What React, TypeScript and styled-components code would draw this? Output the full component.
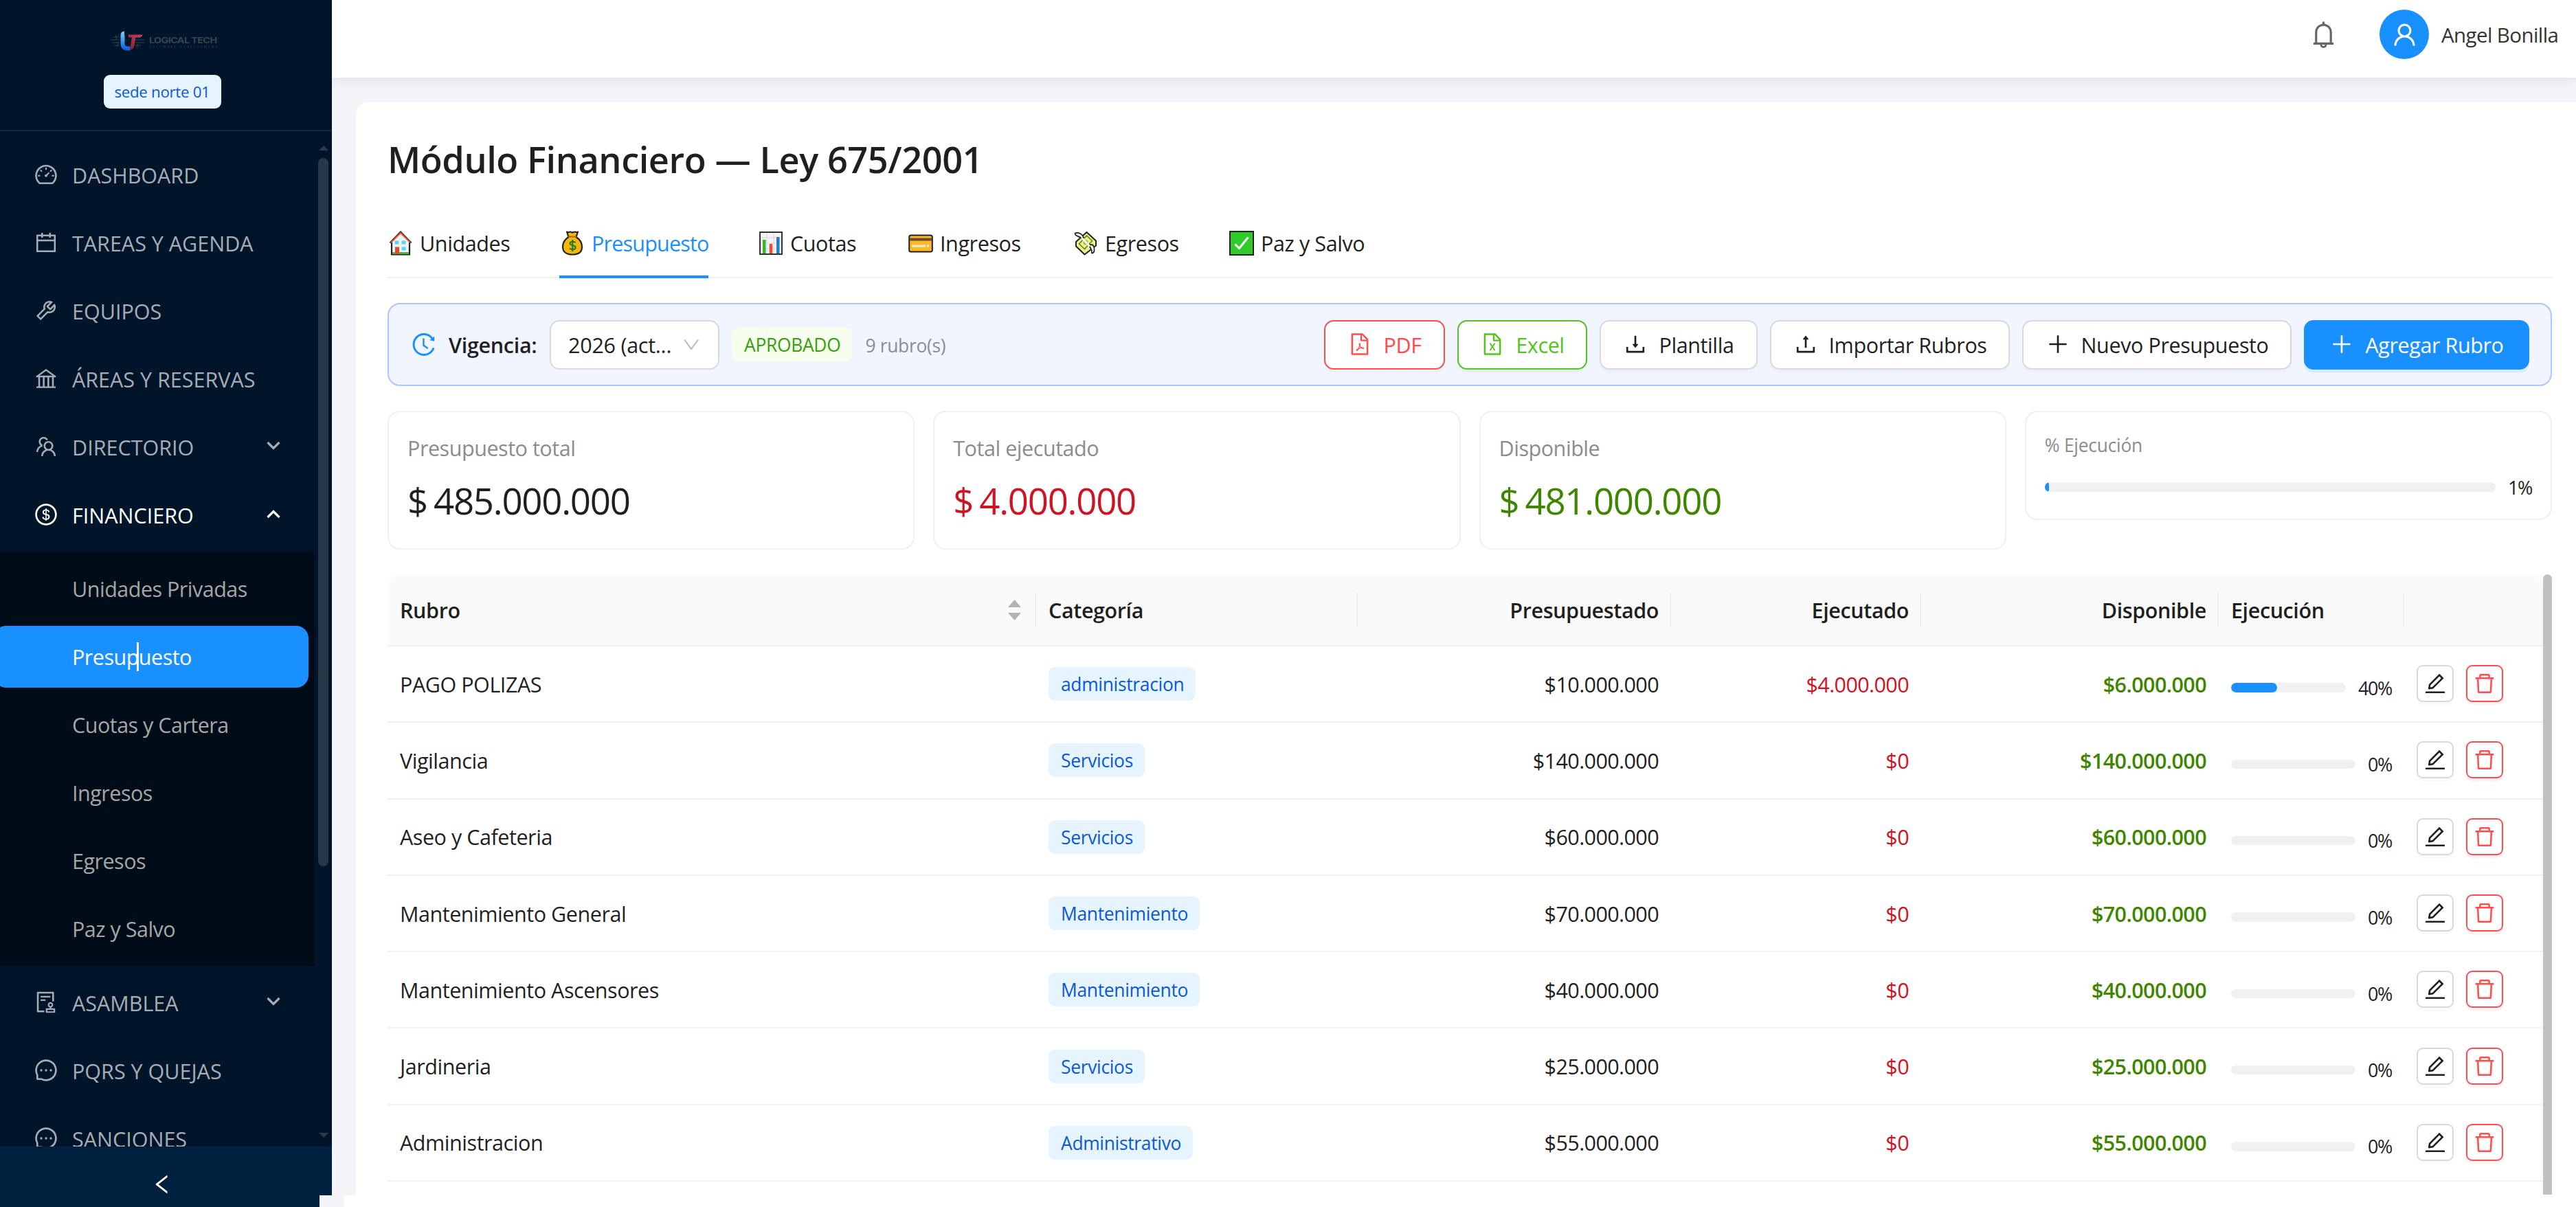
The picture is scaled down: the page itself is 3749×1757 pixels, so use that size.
import type { ReactNode } from "react";
import styled, { createGlobalStyle } from "styled-components";
import {
  AiOutlineAudit,
  AiOutlineBank,
  AiOutlineBell,
  AiOutlineCalendar,
  AiOutlineDashboard,
  AiOutlineDelete,
  AiOutlineDollarCircle,
  AiOutlineDownload,
  AiOutlineDown,
  AiOutlineEdit,
  AiOutlineFileExcel,
  AiOutlineFilePdf,
  AiOutlineHistory,
  AiOutlineLeft,
  AiOutlineMessage,
  AiOutlinePlus,
  AiOutlineTeam,
  AiOutlineTool,
  AiOutlineUpload,
  AiOutlineUser,
} from "react-icons/ai";

interface MenuEntry {
  label: string;
  icon: ReactNode;
  arrow?: "up" | "down";
  active?: boolean;
}

interface Rubro {
  name: string;
  category: string;
  budget: string;
  executed: string;
  available: string;
  percent: number;
}

const topMenu: MenuEntry[] = [
  { label: "DASHBOARD", icon: <AiOutlineDashboard /> },
  { label: "TAREAS Y AGENDA", icon: <AiOutlineCalendar /> },
  { label: "EQUIPOS", icon: <AiOutlineTool /> },
  { label: "ÁREAS Y RESERVAS", icon: <AiOutlineBank /> },
  { label: "DIRECTORIO", icon: <AiOutlineTeam />, arrow: "down" },
  {
    label: "FINANCIERO",
    icon: <AiOutlineDollarCircle />,
    arrow: "up",
    active: true,
  },
];

const financeMenu = [
  "Unidades Privadas",
  "Presupuesto",
  "Cuotas y Cartera",
  "Ingresos",
  "Egresos",
  "Paz y Salvo",
];

const bottomMenu: MenuEntry[] = [
  { label: "ASAMBLEA", icon: <AiOutlineAudit />, arrow: "down" },
  { label: "PQRS Y QUEJAS", icon: <AiOutlineMessage /> },
  { label: "SANCIONES", icon: <AiOutlineMessage /> },
];

const rubros: Rubro[] = [
  {
    name: "PAGO POLIZAS",
    category: "administracion",
    budget: "$10.000.000",
    executed: "$4.000.000",
    available: "$6.000.000",
    percent: 40,
  },
  {
    name: "Vigilancia",
    category: "Servicios",
    budget: "$140.000.000",
    executed: "$0",
    available: "$140.000.000",
    percent: 0,
  },
  {
    name: "Aseo y Cafeteria",
    category: "Servicios",
    budget: "$60.000.000",
    executed: "$0",
    available: "$60.000.000",
    percent: 0,
  },
  {
    name: "Mantenimiento General",
    category: "Mantenimiento",
    budget: "$70.000.000",
    executed: "$0",
    available: "$70.000.000",
    percent: 0,
  },
  {
    name: "Mantenimiento Ascensores",
    category: "Mantenimiento",
    budget: "$40.000.000",
    executed: "$0",
    available: "$40.000.000",
    percent: 0,
  },
  {
    name: "Jardineria",
    category: "Servicios",
    budget: "$25.000.000",
    executed: "$0",
    available: "$25.000.000",
    percent: 0,
  },
  {
    name: "Administracion",
    category: "Administrativo",
    budget: "$55.000.000",
    executed: "$0",
    available: "$55.000.000",
    percent: 0,
  },
];

const HouseIcon = () => (
  <svg viewBox="0 0 36 36">
    <path
      d="M2.500 17.500 18 1.500l15.500 16M5 16v18.500h26V16"
      fill="#f2f2f2"
      stroke="#222"
      strokeWidth="2.200"
    />
    <path d="M4 17 18 3l14 14" fill="none" stroke="#e5533d" strokeWidth="2" />
    <rect x="6" y="31" width="24" height="3" fill="#4bb543" />
    <rect x="10" y="23.500" width="6" height="10" fill="#e8452c" />
    <path
      d="M9.500 14.500h6v5h-6zM19.500 14.500h6v5h-6zM19.500 23.500h6v5h-6z"
      fill="#4fd8f7"
    />
  </svg>
);

const MoneyBagIcon = () => (
  <svg viewBox="0 0 36 36">
    <path
      d="M10 1.500c2 1.300 3.600 0 5 0s2 1 3 1 2-1 3.500-1 3 1.300 4.500 0l-2.500 7.500c5.500 3.500 8.500 8.500 8.500 14.500 0 7-5 11-14 11s-14-4-14-11c0-6 3-11 8.500-14.500z"
      fill="#f8b60c"
      stroke="#222"
      strokeWidth="2.200"
      strokeLinejoin="round"
    />
    <path d="M12 8.500h12" stroke="#a86400" strokeWidth="2" />
    <path
      d="M22.500 17.200c-1-1.500-8-2.500-8 1.300 0 3.500 8.200 2 8.200 5.700 0 3.600-7.400 3.300-8.700 1M18.300 13v17"
      fill="none"
      stroke="#1d7a22"
      strokeWidth="2"
    />
  </svg>
);

const ChartIcon = () => (
  <svg viewBox="0 0 36 36">
    <rect
      x="2"
      y="2"
      width="32"
      height="32"
      fill="#f4f4f4"
      stroke="#333"
      strokeWidth="2"
    />
    <path
      d="M3 10h30M3 18h30M3 26h30M12 3v30M22 3v30"
      stroke="#d8d8d8"
      strokeWidth="1"
    />
    <rect x="6" y="13" width="4.500" height="20" fill="#36b82c" />
    <rect x="15.700" y="19" width="4.500" height="14" fill="#ee4b3a" />
    <rect x="26" y="9" width="4.500" height="24" fill="#1d7fd8" />
  </svg>
);

const CardIcon = () => (
  <svg viewBox="0 0 36 36">
    <rect
      x="1.200"
      y="6.500"
      width="33.600"
      height="24"
      rx="2.500"
      fill="#fdb72b"
      stroke="#222"
      strokeWidth="2"
    />
    <rect x="2.200" y="10.500" width="31.600" height="4" fill="#6b4a2e" />
    <rect x="5" y="20.500" width="20" height="3" fill="#fff3c9" />
    <circle cx="28.500" cy="22" r="1.800" fill="#fff3c9" />
  </svg>
);

const FlyingMoneyIcon = () => (
  <svg viewBox="0 0 36 36">
    <path
      d="M19.500 2 33 14.500v7L16.500 34.500 4 22.500V16z"
      fill="#eaf583"
      stroke="#222"
      strokeWidth="2"
      strokeLinejoin="round"
    />
    <path
      d="m19.500 7 8 7.500-11 12-8-7.500z"
      fill="none"
      stroke="#6f7a35"
      strokeWidth="1.600"
    />
    <circle cx="18" cy="16.800" r="3.600" fill="#a7b25a" />
    <path
      d="M12.500 11.500C8 6 3 9.500 2.500 3.500c5-1.500 10 .5 12.500 6zM22.500 20c1.500 5 5.500 6 4.500 12.500 4 0 5-7 1.500-12z"
      fill="#fff"
      stroke="#222"
      strokeWidth="1.800"
      strokeLinejoin="round"
    />
    <path d="m12 10 12 12.500" stroke="#fff" strokeWidth="2.600" />
  </svg>
);

const CheckIcon = () => (
  <svg viewBox="0 0 36 36">
    <rect
      x="1"
      y="1"
      width="34"
      height="34"
      fill="#2fcb28"
      stroke="#222"
      strokeWidth="2"
    />
    <path
      d="m8.500 19.500 6 6L27.500 9.500"
      fill="none"
      stroke="#fff"
      strokeWidth="3"
    />
  </svg>
);

const tabs = [
  { label: "Unidades", icon: <HouseIcon />, width: 178 },
  { label: "Presupuesto", icon: <MoneyBagIcon />, width: 217, active: true },
  { label: "Cuotas", icon: <ChartIcon />, width: 146 },
  { label: "Ingresos", icon: <CardIcon />, width: 168 },
  { label: "Egresos", icon: <FlyingMoneyIcon />, width: 155 },
  { label: "Paz y Salvo", icon: <CheckIcon />, width: 205 },
];

const stats = [
  { label: "Presupuesto total", value: "485.000.000", color: "#1f1f1f" },
  { label: "Total ejecutado", value: "4.000.000", color: "#cf1322" },
  { label: "Disponible", value: "481.000.000", color: "#3f8600" },
];

const BrandLogo = () => (
  <Logo viewBox="0 0 159 28">
    <defs>
      <linearGradient id="brandBlue" x1="0" y1="0" x2="0" y2="1">
        <stop offset="0" stopColor="#6cc4f5" />
        <stop offset="1" stopColor="#1565d8" />
      </linearGradient>
      <linearGradient id="brandRed" x1="1" y1="0" x2="0" y2="1">
        <stop offset="0" stopColor="#cf3f5c" />
        <stop offset="1" stopColor="#7d1f36" />
      </linearGradient>
    </defs>
    <g stroke="#35414f" strokeWidth="1" fill="none">
      <path d="M4 12h13M8 8h9M6 16h11M9 20h8M12 5v6M14 15v7" />
      <path d="M40 12h13M39 16h14M40 8h8M39 20h9M45 5v5M43 18v6" />
    </g>
    {/* interlocked mark: the blue hook passes under the red hammer */}
    <path
      d="M24 2.500c-1.800 0-2.500 1-2.500 3V17c0 5.500 3 7.500 7.500 7.500h3.500"
      fill="none"
      stroke="url(#brandBlue)"
      strokeWidth="6"
    />
    <path
      d="M29 4.500h21.500c-.5 2.500-2.500 4-5.500 4h-4.500L38 22c-.5 2.700-2.500 4-6 4l3-17.500h-4.500z"
      fill="url(#brandRed)"
    />
    <g fontFamily="Inter, sans-serif" fill="#3b434e">
      <text
        x="60"
        y="17"
        fontSize="11.500"
        fontWeight="700"
        textLength="98.500"
        lengthAdjust="spacingAndGlyphs"
      >
        LOGICAL TECH
      </text>
      <text x="60" y="23.500" fontSize="4.200" textLength="98.500">
        SOFTWARE DEVELOPMENT
      </text>
    </g>
  </Logo>
);

const Arrow = ({ up }: { up?: boolean }) => (
  <ArrowSvg viewBox="0 0 20 14">
    <path d={up ? "M1.500 12 10 3.500l8.500 8.500" : "M1.500 2 10 10.500 18.500 2"} />
  </ArrowSvg>
);

const renderEntry = (entry: MenuEntry) => (
  <MenuItem key={entry.label} $active={entry.active}>
    {entry.icon}
    <span>{entry.label}</span>
    {entry.arrow && <Arrow up={entry.arrow === "up"} />}
  </MenuItem>
);

const Progress = ({ percent }: { percent: number }) => (
  <ProgressRow>
    <ProgressTrack>
      <ProgressFill style={{ width: `${percent}%` }} />
    </ProgressTrack>
    <span>{percent}%</span>
  </ProgressRow>
);

export default function App() {
  return (
    <>
      <GlobalStyle />
      <Layout>
        <Sider>
          <SiderHeader>
            <BrandLogo />
            <SiteTag>sede norte 01</SiteTag>
          </SiderHeader>
          <SiderBody>
            <Menu>
              {topMenu.map(renderEntry)}
              <SubMenu>
                {financeMenu.map((label) => (
                  <SubMenuItem key={label} $selected={label === "Presupuesto"}>
                    {label}
                    {label === "Presupuesto" && <TextCursor />}
                  </SubMenuItem>
                ))}
              </SubMenu>
              {bottomMenu.map(renderEntry)}
            </Menu>
            <SiderScroll>
              <ScrollArrow viewBox="0 0 14 7">
                <path d="M0 7 7 0l7 7z" />
              </ScrollArrow>
              <SiderThumb />
              <ScrollArrow viewBox="0 0 14 7">
                <path d="M0 0l7 7 7-7z" />
              </ScrollArrow>
            </SiderScroll>
          </SiderBody>
          <Collapse>
            <AiOutlineLeft />
          </Collapse>
        </Sider>

        <Main>
          <Header>
            <AiOutlineBell />
            <Avatar>
              <AiOutlineUser />
            </Avatar>
            <UserName>Angel Bonilla</UserName>
          </Header>

          <Content>
            <Title>Módulo Financiero — Ley 675/2001</Title>
            <Tabs>
              {tabs.map((tab) => (
                <Tab key={tab.label} $active={tab.active} $width={tab.width}>
                  {tab.icon}
                  {tab.label}
                </Tab>
              ))}
            </Tabs>

            <Toolbar>
              <AiOutlineHistory />
              <PeriodLabel>Vigencia:</PeriodLabel>
              <Select>
                <span>2026 (act...</span>
                <AiOutlineDown />
              </Select>
              <StatusTag>APROBADO</StatusTag>
              <Count>9 rubro(s)</Count>
              <Actions>
                <Button $width={176} $color="#ff4d4f">
                  <AiOutlineFilePdf />
                  PDF
                </Button>
                <Button $width={189} $color="#52c41a">
                  <AiOutlineFileExcel />
                  Excel
                </Button>
                <Button $width={230}>
                  <AiOutlineDownload />
                  Plantilla
                </Button>
                <Button $width={349}>
                  <AiOutlineUpload />
                  Importar Rubros
                </Button>
                <Button $width={392}>
                  <AiOutlinePlus />
                  Nuevo Presupuesto
                </Button>
                <PrimaryButton $width={328}>
                  <AiOutlinePlus />
                  Agregar Rubro
                </PrimaryButton>
              </Actions>
            </Toolbar>

            <Stats>
              {stats.map((stat) => (
                <StatCard key={stat.label}>
                  <StatLabel>{stat.label}</StatLabel>
                  <StatValue $color={stat.color}>
                    <span>$</span>
                    {stat.value}
                  </StatValue>
                </StatCard>
              ))}
              <ExecutionCard>
                <ExecutionLabel>% Ejecución</ExecutionLabel>
                <Progress percent={1} />
              </ExecutionCard>
            </Stats>

            <TableArea>
              <Table>
                <HeadRow>
                  <HeadCell>
                    Rubro
                    <Sorter viewBox="0 0 19 30">
                      <path d="M0 11 9.500 0 19 11zM0 19l9.500 11L19 19z" />
                    </Sorter>
                  </HeadCell>
                  <HeadCell>Categoría</HeadCell>
                  <HeadCell $right>Presupuestado</HeadCell>
                  <HeadCell $right>Ejecutado</HeadCell>
                  <HeadCell $right>Disponible</HeadCell>
                  <HeadCell>Ejecución</HeadCell>
                  <HeadCell />
                </HeadRow>
                {rubros.map((rubro) => (
                  <Row key={rubro.name}>
                    <Cell>{rubro.name}</Cell>
                    <Cell>
                      <CategoryTag>{rubro.category}</CategoryTag>
                    </Cell>
                    <AmountCell>{rubro.budget}</AmountCell>
                    <AmountCell $color="#cf1322">{rubro.executed}</AmountCell>
                    <AmountCell $color="#3f8600" $strong>
                      {rubro.available}
                    </AmountCell>
                    <ProgressCell>
                      <Progress percent={rubro.percent} />
                    </ProgressCell>
                    <Cell>
                      <IconButton>
                        <AiOutlineEdit />
                      </IconButton>
                      <IconButton $danger>
                        <AiOutlineDelete />
                      </IconButton>
                    </Cell>
                  </Row>
                ))}
                <TableEdge />
              </Table>
              <TableThumb />
            </TableArea>
          </Content>
        </Main>
        <CornerStrip />
      </Layout>
    </>
  );
}

const GlobalStyle = createGlobalStyle`
  * {
    box-sizing: border-box;
  }
  body {
    margin: 0;
    overflow: hidden;
    font-family: "Open Sans", "Noto Sans", sans-serif;
    font-size: 30.5px;
    letter-spacing: -0.45px;
    color: #1f1f1f;
  }
  svg {
    flex-shrink: 0;
  }
`;

const Layout = styled.div`
  position: relative;
  display: flex;
  width: 100%;
  height: 1757px;
  overflow: hidden;
  background: #f3f5f9;
`;

const Sider = styled.aside`
  display: flex;
  flex-direction: column;
  flex-shrink: 0;
  width: 483px;
  background: #001529;
`;

const SiderHeader = styled.div`
  display: flex;
  flex-direction: column;
  align-items: center;
  flex-shrink: 0;
  height: 191px;
  padding: 46px 11px 0 0;
  border-bottom: 2px solid #122739;
`;

const Logo = styled.svg`
  width: 159px;
  height: 28px;
  overflow: visible;
`;

const SiteTag = styled.span`
  display: flex;
  align-items: center;
  justify-content: center;
  width: 171px;
  height: 49px;
  margin-top: 35px;
  border-radius: 9px;
  background: #e6f4ff;
  color: #0958d9;
  font-size: 22.3px;
  letter-spacing: -0.3px;
`;

const SiderBody = styled.div`
  display: flex;
  flex: 1;
  min-height: 0;
`;

const Menu = styled.nav`
  display: flex;
  flex-direction: column;
  gap: 9px;
  width: 458px;
  padding-top: 19px;
  overflow: hidden;
`;

const MenuItem = styled.div<{ $active?: boolean }>`
  display: flex;
  align-items: center;
  flex-shrink: 0;
  gap: 20px;
  height: 90px;
  padding: 0 50px 0 49px;
  color: ${({ $active }) => ($active ? "#ffffff" : "#a6adb4")};
  letter-spacing: 0;

  span {
    flex: 1;
  }

  > svg:first-child {
    width: 36px;
    height: 36px;
    margin-top: -2px;
  }
`;

const ArrowSvg = styled.svg`
  width: 20px;
  height: 14px;
  margin-top: -4px;
  fill: none;
  stroke: currentColor;
  stroke-width: 3.2;
`;

const SubMenu = styled.div`
  display: flex;
  flex-direction: column;
  flex-shrink: 0;
  gap: 9px;
  height: 603px;
  margin-top: -1px;
  padding: 9px 9px 9px 0;
  background: #000c17;
`;

const SubMenuItem = styled.div<{ $selected: boolean }>`
  position: relative;
  display: flex;
  align-items: center;
  height: 90px;
  margin-left: -9px;
  padding-left: 114px;
  border-radius: 18px;
  background: ${({ $selected }) => ($selected ? "#1890ff" : "transparent")};
  color: ${({ $selected }) => ($selected ? "#ffffff" : "#a6a6a6")};
  letter-spacing: -0.5px;
`;

const TextCursor = styled.span`
  position: absolute;
  top: 24px;
  left: 208px;
  width: 3px;
  height: 42px;
  background: #ffffff;
`;

const SiderScroll = styled.div`
  display: flex;
  flex-direction: column;
  align-items: center;
  width: 25px;
  padding: 21px 0 13px;
`;

const ScrollArrow = styled.svg`
  width: 14px;
  height: 7px;
  fill: #2b3c4c;
`;

const SiderThumb = styled.div`
  width: 15px;
  height: 1031px;
  margin: 11px 0 388px;
  border-radius: 8px;
  background: #263747;
`;

const Collapse = styled.div`
  display: flex;
  align-items: center;
  justify-content: center;
  flex-shrink: 0;
  height: 88px;
  padding: 22px 11px 0 0;
  background: #002140;
  color: #ffffff;

  svg {
    width: 36px;
    height: 36px;
    margin-bottom: 1px;
  }
`;

const Main = styled.div`
  display: flex;
  flex-direction: column;
  flex: 1;
  min-width: 0;
`;

const Header = styled.header`
  display: flex;
  align-items: center;
  justify-content: flex-end;
  flex-shrink: 0;
  height: 113px;
  padding: 0 26px 13px 0;
  background: #ffffff;
  box-shadow: 0 2px 18px rgba(0, 21, 41, 0.1);

  > svg {
    width: 45px;
    height: 45px;
    margin-right: 59px;
    color: #666666;
  }
`;

const Avatar = styled.div`
  display: flex;
  align-items: center;
  justify-content: center;
  width: 72px;
  height: 72px;
  margin-right: 18px;
  border-radius: 50%;
  background: #1890ff;
  color: #ffffff;

  svg {
    width: 41px;
    height: 41px;
  }
`;

const UserName = styled.span`
  width: 170px;
  padding-top: 1px;
  color: #333333;
  font-size: 29.5px;
  letter-spacing: -0.6px;
  white-space: nowrap;
`;

const Content = styled.main`
  display: flex;
  flex-direction: column;
  flex: 1;
  margin: 36px 0 0 35px;
  padding: 45px 35px 0 46px;
  border-radius: 18px 0 0 0;
  background: #ffffff;
`;

const Title = styled.h1`
  margin: 0;
  font-size: 52.3px;
  font-weight: 600;
  letter-spacing: -0.42px;
  line-height: 76px;
`;

const Tabs = styled.div`
  display: flex;
  flex-shrink: 0;
  gap: 72px;
  height: 104px;
  margin-top: 31px;
  border-bottom: 2px solid #f0f0f0;
`;

const Tab = styled.div<{ $active?: boolean; $width: number }>`
  display: flex;
  align-items: center;
  gap: 10px;
  width: ${({ $width }) => $width}px;
  height: 104px;
  padding-top: 6px;
  border-bottom: 4px solid
    ${({ $active }) => ($active ? "#1890ff" : "transparent")};
  color: ${({ $active }) => ($active ? "#1890ff" : "#1f1f1f")};
  letter-spacing: ${({ $active }) => ($active ? "-0.8px" : "-0.4px")};
  white-space: nowrap;

  svg {
    width: 36px;
    height: 36px;
    margin-left: 1px;
  }
`;

const Toolbar = styled.section`
  display: flex;
  align-items: center;
  flex-shrink: 0;
  height: 121px;
  margin-top: 36px;
  padding: 0 31px 0 32px;
  border: 2px solid #adc6ff;
  border-radius: 18px;
  background: #f0f5ff;

  > svg {
    width: 39px;
    height: 39px;
    margin-left: -1px;
    color: #1890ff;
  }
`;

const PeriodLabel = styled.strong`
  width: 147px;
  margin-left: 17px;
  font-weight: 600;
  letter-spacing: -0.3px;
  white-space: nowrap;
`;

const Select = styled.div`
  display: flex;
  align-items: center;
  justify-content: space-between;
  width: 247px;
  height: 72px;
  margin-right: 18px;
  padding: 0 24px 0 25px;
  border: 2px solid #d9d9d9;
  border-radius: 14px;
  background: #ffffff;

  span {
    letter-spacing: -0.25px;
  }

  svg {
    width: 30px;
    height: 30px;
    color: #bfbfbf;
  }
`;

const Tag = styled.span`
  display: inline-flex;
  align-items: center;
  height: 49px;
  padding: 1px 17px 0 18px;
  border-radius: 9px;
  font-size: 26.4px;
  letter-spacing: -0.3px;
`;

const StatusTag = styled(Tag)`
  background: #f6ffed;
  color: #389e0d;
`;

const CategoryTag = styled(Tag)`
  background: #e6f4ff;
  color: #0958d9;
`;

const Count = styled.span`
  margin-left: 19px;
  padding-top: 2px;
  color: #8a8d94;
  font-size: 26.4px;
  letter-spacing: -0.3px;
`;

const Actions = styled.div`
  display: flex;
  gap: 18px;
  margin-left: auto;
`;

const Button = styled.button<{ $width: number; $color?: string }>`
  display: flex;
  align-items: center;
  justify-content: center;
  gap: 16px;
  width: ${({ $width }) => $width}px;
  height: 72px;
  padding: 0;
  border: 2px solid ${({ $color }) => $color ?? "#d9d9d9"};
  border-radius: 14px;
  background: #ffffff;
  box-shadow: 0 4.5px 0 rgba(0, 0, 0, 0.02);
  color: ${({ $color }) => $color ?? "#1f1f1f"};
  font: inherit;
  letter-spacing: -0.4px;
  white-space: nowrap;

  svg {
    width: 36px;
    height: 36px;
    margin-top: -2px;
  }
`;

const PrimaryButton = styled(Button)`
  border-color: #1890ff;
  background: #1890ff;
  box-shadow: 0 4.5px 0 rgba(5, 145, 255, 0.1);
  color: #ffffff;
`;

const Stats = styled.section`
  display: grid;
  grid-template-columns: repeat(4, 1fr);
  align-items: start;
  flex-shrink: 0;
  gap: 27px;
  height: 202px;
  margin-top: 36px;
`;

const StatCard = styled.div`
  height: 202px;
  padding: 27px;
  border: 2px solid #f0f0f0;
  border-radius: 18px;
`;

const ExecutionCard = styled(StatCard)`
  height: 159px;
`;

const StatLabel = styled.div`
  color: #8c8c8c;
  line-height: 50px;
`;

const ExecutionLabel = styled(StatLabel)`
  font-size: 26.4px;
  letter-spacing: -0.25px;
  line-height: 43px;
`;

const StatValue = styled.div<{ $color: string }>`
  display: flex;
  gap: 9px;
  margin-top: 9px;
  color: ${({ $color }) => $color};
  font-size: 52.8px;
  letter-spacing: -1.25px;
  line-height: 86px;
`;

const ProgressRow = styled.div`
  display: flex;
  align-items: center;
  flex: 1;
  gap: 18px;
  font-size: 27px;
  letter-spacing: -1.4px;

  ${ExecutionCard} & {
    height: 42px;
    margin-top: 18px;
  }
`;

const ProgressTrack = styled.div`
  flex: 1;
  height: 13.5px;
  overflow: hidden;
  border-radius: 7px;
  background: #f0f0f0;
`;

const ProgressFill = styled.div`
  height: 100%;
  border-radius: 7px;
  background: #1890ff;
`;

const TableArea = styled.section`
  display: flex;
  flex-shrink: 0;
  height: 903px;
  margin-top: 36px;
`;

const Table = styled.div`
  flex: 1;
  overflow: hidden;
  border-radius: 18px 18px 0 0;
`;

const Row = styled.div`
  display: grid;
  grid-template-columns: 944px 468px 456px 364px 433px 270px 1fr;
  height: 111.3px;
  border-bottom: 2px solid #f0f0f0;
`;

const HeadRow = styled(Row)`
  height: 105px;
  background: #fafafa;
  letter-spacing: -0.4px;
`;

const Cell = styled.div<{ $right?: boolean; $color?: string; $strong?: boolean }>`
  display: flex;
  align-items: center;
  justify-content: ${({ $right }) => ($right ? "flex-end" : "flex-start")};
  padding: 0 18px;
  color: ${({ $color }) => $color ?? "inherit"};
  font-weight: ${({ $strong }) => ($strong ? 600 : 400)};
`;

const AmountCell = styled(Cell)`
  justify-content: flex-end;
  letter-spacing: -0.6px;
`;

const HeadCell = styled(Cell)`
  position: relative;
  font-weight: 600;

  &:not(:last-child)::after {
    content: "";
    position: absolute;
    top: 27px;
    right: 0;
    width: 2px;
    height: 49px;
    background: #f0f0f0;
  }
`;

const Sorter = styled.svg`
  width: 19px;
  height: 30px;
  margin-left: auto;
  margin-right: 4px;
  fill: #b3b3b3;
`;

const ProgressCell = styled(Cell)`
  padding-top: 11px;
`;

const IconButton = styled.button<{ $danger?: boolean }>`
  display: flex;
  align-items: center;
  justify-content: center;
  width: 54px;
  height: 54px;
  margin: -1px 18px 0 0;
  padding: 0;
  border: 2px solid ${({ $danger }) => ($danger ? "#ff4d4f" : "#d9d9d9")};
  border-radius: 9px;
  background: #ffffff;
  box-shadow: 0 4.5px 0
    ${({ $danger }) => ($danger ? "rgba(255, 38, 5, 0.06)" : "rgba(0, 0, 0, 0.02)")};
  color: ${({ $danger }) => ($danger ? "#ff4d4f" : "#1f1f1f")};

  svg {
    width: 36px;
    height: 36px;
  }
`;

const TableEdge = styled.div`
  height: 1px;
  margin: 19px 9px 0 5px;
  background: #f0f0f0;
`;

const TableThumb = styled.div`
  width: 13px;
  border-radius: 7px 7px 0 0;
  background: #c1c1c1;
`;

const CornerStrip = styled.div`
  position: absolute;
  bottom: 0;
  left: 465px;
  width: 54px;
  height: 17px;
  border-right: 18px solid #ffffff;
  background: #f3f5f9;
`;
